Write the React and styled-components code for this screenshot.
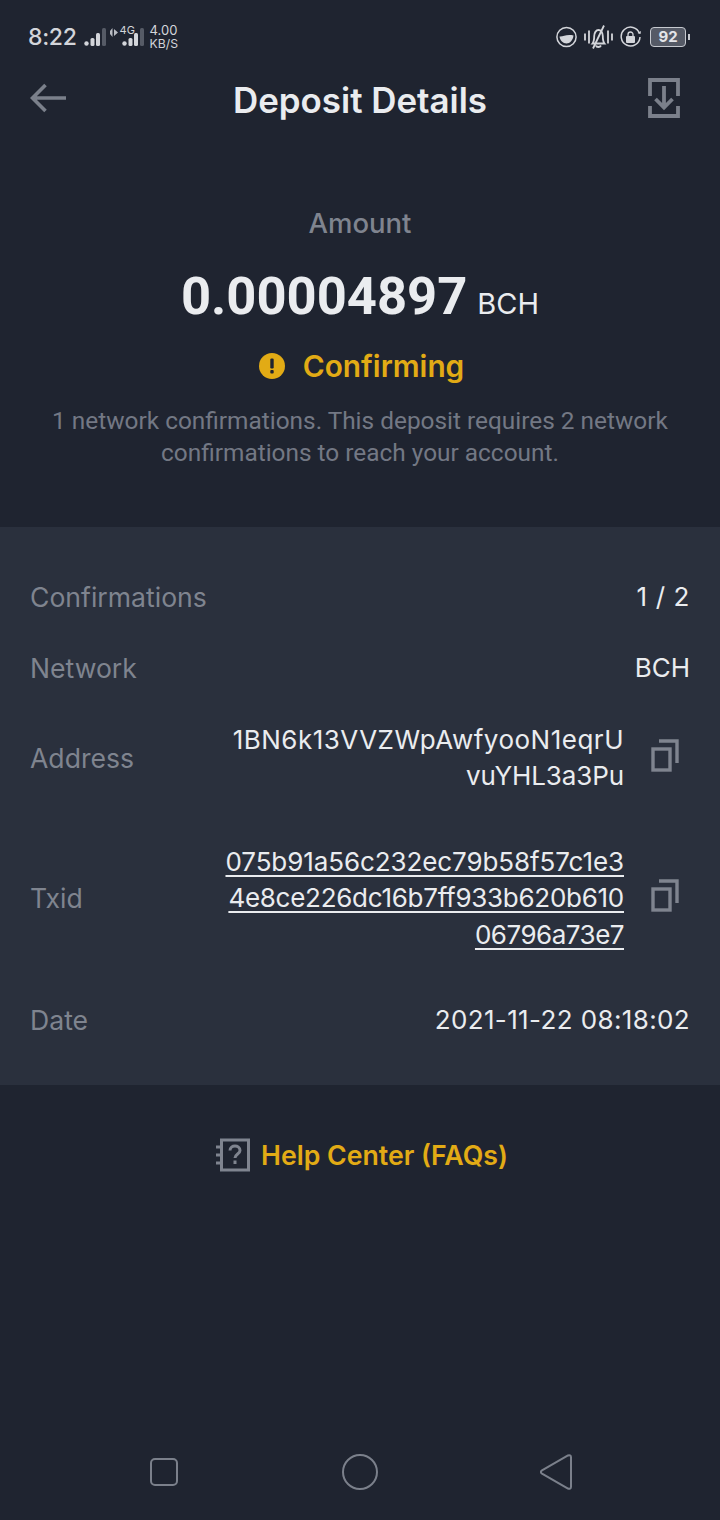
import React from 'react';
import styled, { createGlobalStyle } from 'styled-components';

const GlobalStyle = createGlobalStyle`
	html, body {
		margin: 0;
		padding: 0;
		background: #1f2430;
	}
	* {
		box-sizing: border-box;
	}
`;

// tracking is per line, the plex text of the original runs a bit different from Inter
const rows = [
	{ label: 'Confirmations', lines: ['1 / 2'], tracking: [0.6] },
	{ label: 'Network', lines: ['BCH'], tracking: [0] },
	{ label: 'Address', lines: ['1BN6k13VVZWpAwfyooN1eqrU', 'vuYHL3a3Pu'], tracking: [0.5, -0.1], copy: true },
	{
		label: 'Txid',
		lines: ['075b91a56c232ec79b58f57c1e3', '4e8ce226dc16b7ff933b620b610', '06796a73e7'],
		tracking: [-0.09, -0.27, -0.5],
		copy: true,
		link: true,
	},
	{ label: 'Date', lines: ['2021-11-22 08:18:02'], tracking: [0.37] },
];

const App = () => {
	return (
		<Page>
			<GlobalStyle />
			<StatusBar>
				<LeftStatus>
					<Clock>8:22</Clock>
					<SignalIcon />
					<NetBlock>
						<svg width="8" height="9" viewBox="0 0 8 9" fill="#b9bcc3">
							<path d="M2.500 0v9L0 6V3zM4 1l4 3.500L4 8z" />
						</svg>
						<SignalIcon />
						<NetTag>4G</NetTag>
					</NetBlock>
					<Speed>
						<span>4.00</span>
						<SpeedUnit>KB/S</SpeedUnit>
					</Speed>
				</LeftStatus>
				<RightStatus>
					<svg width="21" height="22" viewBox="0 0 21 22" fill="none">
						<circle cx="10.500" cy="11" r="9.600" stroke="#d3d5da" strokeWidth="1.500" />
						<path d="M3.500 10.500C7 11 10 8 17.500 9.500 17 14 14 17.500 10.500 17.500 7 17.500 4 14.500 3.500 10.500Z" fill="#d3d5da" />
					</svg>
					<svg width="29" height="24" viewBox="0 0 29 24" fill="none" stroke="#d3d5da" strokeWidth="1.800">
						<path d="M1 8.500v7M5 5.500v13M24 5.500v13M28 8.500v7" />
						<path d="M8.500 18.500c1.700-2 1.700-4.500 1.700-7.500 0-3 1.800-6 4.300-6s4.300 3 4.300 6c0 3 0 5.500 1.700 7.500z" />
						<path d="M20 .5 9 23.500M12 20.500c.5 2 4 2 5 0" />
					</svg>
					<svg width="21" height="22" viewBox="0 0 21 22" fill="none">
						<path d="M19.500 7.500A9.400 9.400 0 1 0 20 11" stroke="#d3d5da" strokeWidth="1.500" />
						<path d="m17.500 7 3 1 .5-3" fill="#d3d5da" />
						<rect x="6" y="10" width="9" height="7" rx="1" fill="#d3d5da" />
						<path d="M8 10.500V8.500a2.500 2.500 0 0 1 5 0v2" stroke="#d3d5da" strokeWidth="1.300" />
					</svg>
					<Battery>
						<BatteryBody>92</BatteryBody>
						<BatteryTip />
					</Battery>
				</RightStatus>
			</StatusBar>

			<Header>
				<svg width="36" height="30" viewBox="0 0 36 30" fill="none" stroke="#7b808b" strokeWidth="3.600">
					<path d="M36 15H3M15.500 2 2.500 15l13 13" />
				</svg>
				<Title>Deposit Details</Title>
				<ExportIcon width="32" height="40" viewBox="0 0 32 40" fill="none" stroke="#7b808b" strokeWidth="3.800">
					<path d="M2 18V2h28v16M2 28v10h28V28" />
					<path d="M16 8v22M7.500 21l8.500 8.500 8.500-8.500" />
				</ExportIcon>
			</Header>

			<Summary>
				<AmountLabel>Amount</AmountLabel>
				<AmountLine>
					<AmountValue>0.00004897</AmountValue>
					<AmountUnit>BCH</AmountUnit>
				</AmountLine>
				<StatusLine>
					<svg width="26" height="26" viewBox="0 0 26 26">
						<circle cx="13" cy="13" r="13" fill="#e2ab15" />
						<rect x="11.300" y="5.500" width="3.400" height="10" rx="1.200" fill="#1f2430" />
						<rect x="11.300" y="17" width="3.400" height="3.400" rx="1" fill="#1f2430" />
					</svg>
					<StatusText>Confirming</StatusText>
				</StatusLine>
				<Note>
					1 network confirmations. This deposit requires 2 network
					<br />
					confirmations to reach your account.
				</Note>
			</Summary>

			<Panel>
				{rows.map(row => (
					<Row key={row.label} $copy={row.copy}>
						<RowLabel>{row.label}</RowLabel>
						<RowRight>
							<RowValue>
								{row.lines.map((line, i) => (
									<ValueLine key={line} $link={row.link} $tracking={row.tracking[i]}>
										{line}
									</ValueLine>
								))}
							</RowValue>
							{row.copy && (
								<CopyIcon width="28" height="33" viewBox="0 0 28 33" fill="none" stroke="#7f848f" strokeWidth="3.400">
									<path d="M8 2h18v22" />
									<rect x="2" y="10" width="17" height="21" />
								</CopyIcon>
							)}
						</RowRight>
					</Row>
				))}
			</Panel>

			<Help>
				<svg width="34" height="34" viewBox="0 0 34 34" fill="none" stroke="#7f848f" strokeWidth="3">
					<rect x="5.500" y="2" width="27" height="30" />
					<path d="M0 9h5M0 17h5M0 25h5" />
					<path d="M14 12.500c0-3 2.500-4.500 5-4.500s5 1.500 5 4.500c0 3.500-5 3.500-5 7.500" />
					<path d="M19 22.500v3.500" />
				</svg>
				<HelpText>Help Center (FAQs)</HelpText>
			</Help>

			<NavBar>
				<svg width="30" height="30" viewBox="0 0 30 30" fill="none" stroke="#7b808b" strokeWidth="2">
					<rect x="2" y="2" width="26" height="26" rx="4" />
				</svg>
				<svg width="36" height="36" viewBox="0 0 36 36" fill="none" stroke="#7b808b" strokeWidth="2">
					<circle cx="18" cy="18" r="17" />
				</svg>
				<svg width="32" height="36" viewBox="0 0 32 36" fill="none" stroke="#7b808b" strokeWidth="2">
					<path d="M28 1.500c1.500-.8 3 0 3 1.800v29.400c0 1.800-1.500 2.600-3 1.800L2 19.700c-1.500-.9-1.500-2.500 0-3.400z" />
				</svg>
			</NavBar>
		</Page>
	);
};
export default App;

const SignalIcon = () => (
	<svg width="22" height="18" viewBox="0 0 22 18">
		<circle cx="2.500" cy="15.500" r="2.200" fill="#d3d5da" />
		<rect x="6.500" y="10" width="4" height="8" rx="1.500" fill="#d3d5da" />
		<rect x="12" y="5" width="4" height="13" rx="1.500" fill="#d3d5da" />
		<rect x="18" y="0" width="4" height="18" rx="1.500" fill="#565b66" />
	</svg>
);

const Page = styled.div`
	width: 720px;
	height: 1520px;
	display: flex;
	flex-direction: column;
	overflow: hidden;
	background: #1f2430;
	font-family: 'Inter', 'Liberation Sans', sans-serif;
	color: #eaecef;
`;

const StatusBar = styled.div`
	display: flex;
	justify-content: space-between;
	align-items: center;
	height: 74px;
	padding: 0 30px 0 28px;
`;

const LeftStatus = styled.div`
	display: flex;
	align-items: center;
	gap: 6px;
`;

const RightStatus = styled.div`
	display: flex;
	align-items: center;
	gap: 7px;
`;

const Clock = styled.span`
	margin-right: 1px;
	font-size: 23px;
	font-weight: 500;
	letter-spacing: -0.3px;
	color: #d3d5da;
`;

const NetBlock = styled.div`
	position: relative;
	display: flex;
	align-items: flex-start;
	gap: 4px;
	margin-left: -2px;
`;

const NetTag = styled.span`
	position: absolute;
	top: -3px;
	left: 10px;
	font-size: 11px;
	line-height: 11px;
	color: #d3d5da;
`;

const Speed = styled.div`
	display: flex;
	flex-direction: column;
	font-size: 13px;
	line-height: 13px;
	color: #d3d5da;
`;

const SpeedUnit = styled.span`
	font-size: 12.200px;
`;

const Battery = styled.div`
	display: flex;
	align-items: center;
	gap: 2px;
	margin-left: 2px;
`;

const BatteryBody = styled.div`
	width: 36px;
	height: 20px;
	border: 1.500px solid #c6c9cf;
	border-radius: 4px;
	background: #555a66;
	text-align: center;
	font-size: 15px;
	line-height: 17px;
	font-weight: 700;
	color: #e3e4e8;
`;

const BatteryTip = styled.div`
	width: 2px;
	height: 6px;
	background: #c6c9cf;
`;

const Header = styled.div`
	display: grid;
	grid-template-columns: 1fr auto 1fr;
	align-items: center;
	height: 46px;
	padding: 0 30px;
`;

const ExportIcon = styled.svg`
	justify-self: end;
	margin-right: 10px;
`;

const Title = styled.h1`
	margin: 5px 0 0;
	font-size: 34.900px;
	font-weight: 600;
	color: #eaecef;
`;

const Summary = styled.div`
	display: flex;
	flex-direction: column;
	align-items: center;
	height: 407px;
	padding-top: 87px;
`;

const AmountLabel = styled.div`
	font-size: 27.500px;
	font-weight: 500;
	line-height: 32px;
	color: #7f848f;
`;

const AmountLine = styled.div`
	display: flex;
	align-items: baseline;
	gap: 10px;
	margin-top: 25px;
	line-height: 64px;
`;

const AmountValue = styled.span`
	font-family: 'Roboto', 'Liberation Sans', sans-serif;
	font-size: 52.500px;
	font-weight: 700;
	color: #eaecef;
`;

const AmountUnit = styled.span`
	font-size: 29px;
	color: #eaecef;
`;

const StatusLine = styled.div`
	display: flex;
	align-items: center;
	gap: 18px;
	margin: 10px 0 0 3px;
	height: 40px;
`;

const StatusText = styled.span`
	font-size: 29.800px;
	font-weight: 600;
	color: #e2ab15;
`;

const Note = styled.p`
	margin: 19px 0 0;
	font-family: 'Roboto', 'Liberation Sans', sans-serif;
	font-size: 24.400px;
	line-height: 32px;
	text-align: center;
	color: #737884;
`;

const Panel = styled.div`
	display: flex;
	flex-direction: column;
	gap: 35px;
	height: 558px;
	padding: 51.500px 30px 0;
	background: #2a303d;
`;

const Row = styled.div`
	display: flex;
	justify-content: space-between;
	align-items: center;
	margin-bottom: ${props => (props.$copy ? '14px' : '0')};
`;

const RowLabel = styled.span`
	font-size: 26.600px;
	color: #7f848f;
`;

const RowRight = styled.div`
	display: flex;
	align-items: center;
	gap: 27px;
`;

const RowValue = styled.div`
	display: flex;
	flex-direction: column;
	align-items: flex-end;
`;

const ValueLine = styled.span`
	font-size: 26px;
	line-height: 36.500px;
	letter-spacing: ${props => props.$tracking}px;
	color: #eaecef;
	text-decoration: ${props => (props.$link ? 'underline' : 'none')};
	text-underline-offset: 4px;
	text-decoration-thickness: 1.500px;
`;

const CopyIcon = styled.svg`
	display: block;
	margin: 0 11px 6px 0;
`;

const Help = styled.div`
	display: flex;
	justify-content: center;
	align-items: center;
	gap: 11px;
	height: 140px;
	padding-left: 4px;
`;

const HelpText = styled.span`
	font-size: 26.700px;
	font-weight: 600;
	color: #e2ab15;
`;

const NavBar = styled.div`
	display: flex;
	justify-content: space-between;
	align-items: center;
	margin-top: auto;
	padding: 0 148px 0 149px;
	height: 96px;
`;
